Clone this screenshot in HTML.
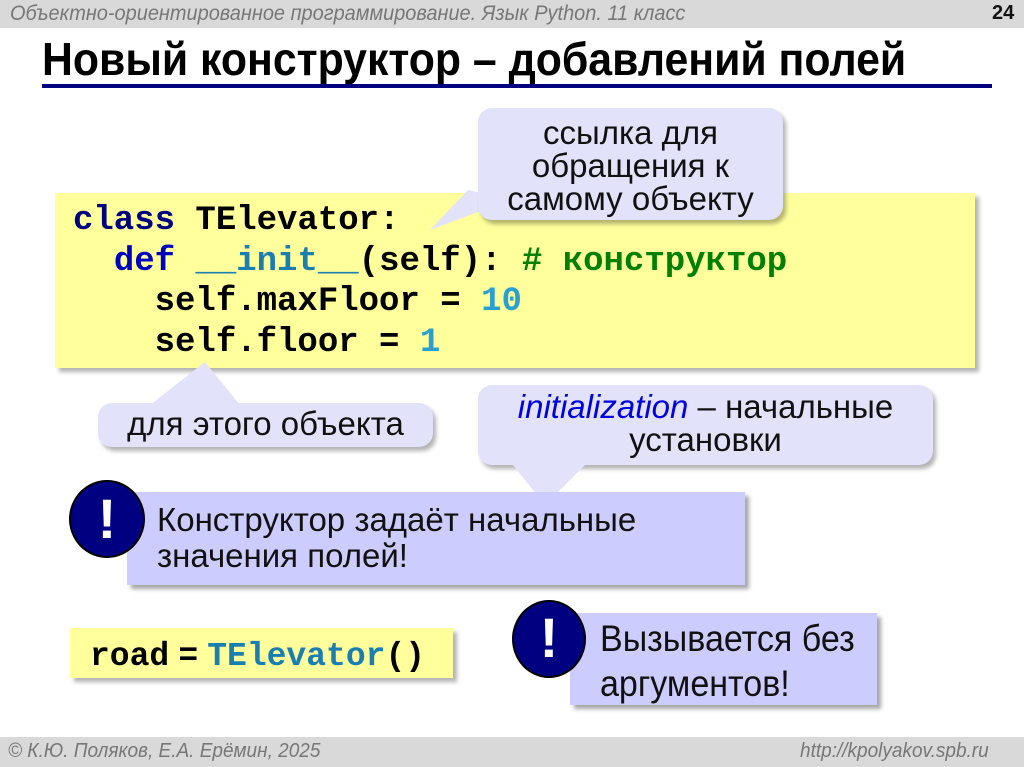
<!DOCTYPE html>
<html><head><meta charset="utf-8"><style>
body{margin:0;width:1024px;height:767px;position:relative;overflow:hidden;background:#fff;font-family:"Liberation Sans",sans-serif}
.a{position:absolute}
.hdr{left:0;top:0;width:1024px;height:28px;background:#d9d9d9}
.bub{background:#e2e2fa;border-radius:14px;box-shadow:3px 4px 4px rgba(0,0,0,.3)}
.box{background:#ccccff;box-shadow:4px 4px 4px rgba(0,0,0,.35)}
.code{font-family:"Liberation Mono",monospace;font-weight:bold;font-size:34px;white-space:pre;line-height:40.5px}
.circ{background:#000080;border:2px solid #000;border-radius:50%;color:#fff;font-weight:bold;text-align:center}
</style></head><body>
<div class="a hdr"></div>
<div class="a" style="left:10px;top:2px;font-size:21px;font-style:italic;color:#777;transform:scaleX(.95);transform-origin:left;white-space:nowrap">Объектно-ориентированное программирование. Язык Python. 11 класс</div>
<div class="a" style="left:992px;top:2px;font-size:20px;font-weight:bold;color:#111">24</div>
<div class="a" style="left:42px;top:32px;font-size:46px;font-weight:bold;color:#000;transform:scaleX(.93);transform-origin:left;white-space:nowrap">Новый конструктор – добавлений полей</div>
<div class="a" style="left:42px;top:84px;width:950px;height:4px;background:#000080"></div>

<div class="a" style="left:55px;top:193px;width:920px;height:175px;background:#ffff9c;box-shadow:4px 4px 4px rgba(0,0,0,.3)"></div>
<div class="a code" style="left:73px;top:201px;color:#000"><span style="color:#000080">class</span> TElevator:
  <span style="color:#0000c0">def</span> <span style="color:#1a7fb0">__init__</span>(self): <span style="color:#008000"># конструктор</span>
    self.maxFloor = <span style="color:#2aa0d0">10</span>
    self.floor = <span style="color:#2aa0d0">1</span></div>

<svg class="a" style="left:0;top:0" width="1024" height="767">
<polygon points="430,230 468,190 510,200" fill="#e2e2fa"/>
<polygon points="150,405 205,362 240,405" fill="#e2e2fa"/>
</svg>
<div class="a bub" style="left:478px;top:108px;width:305px;height:112px"></div>
<div class="a" style="left:478px;top:116px;width:305px;text-align:center;font-size:33px;line-height:33px;color:#111">ссылка для<br>обращения к<br>самому объекту</div>
<div class="a bub" style="left:98px;top:403px;width:335px;height:44px"></div>
<div class="a" style="left:98px;top:405px;width:335px;text-align:center;font-size:33px;color:#111">для этого объекта</div>
<div class="a bub" style="left:478px;top:385px;width:455px;height:80px"></div>
<svg class="a" style="left:0;top:0" width="1024" height="767"><polygon points="505,455 545,505 595,455" fill="#e2e2fa"/></svg>
<div class="a" style="left:478px;top:390px;width:455px;text-align:center;font-size:33px;line-height:33px;color:#111;white-space:nowrap"><i style="color:#0000e0">initialization</i> – начальные<br>установки</div>

<div class="a box" style="left:127px;top:492px;width:618px;height:93px"></div>
<div class="a" style="left:157px;top:502px;font-size:33px;line-height:36px;color:#111;white-space:nowrap">Конструктор задаёт начальные<br>значения полей!</div>
<div class="a circ" style="left:69px;top:480px;width:72px;height:74px;font-size:56px;line-height:74px">!</div>

<div class="a" style="left:70px;top:628px;width:383px;height:50px;background:#ffff9c;box-shadow:4px 4px 4px rgba(0,0,0,.3)"></div>
<div class="a code" style="left:90px;top:634px;font-size:33px;line-height:40px">road<span style="display:inline-block;width:38px;text-align:center;font-family:'Liberation Sans'">=</span><span style="color:#1a7fb0">TElevator</span>()</div>

<div class="a box" style="left:570px;top:613px;width:307px;height:92px"></div>
<div class="a" style="left:600px;top:616px;font-size:37px;line-height:45px;color:#111;transform:scaleX(.92);transform-origin:left;white-space:nowrap">Вызывается без<br>аргументов!</div>
<div class="a circ" style="left:512px;top:600px;width:70px;height:74px;font-size:56px;line-height:72px">!</div>

<div class="a" style="left:0;top:737px;width:1024px;height:30px;background:#d9d9d9"></div>
<div class="a" style="left:8px;top:740px;font-size:20px;font-style:italic;color:#777;transform:scaleX(.95);transform-origin:left;white-space:nowrap">© К.Ю. Поляков, Е.А. Ерёмин, 2025</div>
<div class="a" style="left:800px;top:740px;font-size:20px;font-style:italic;color:#777;transform:scaleX(.95);transform-origin:left;white-space:nowrap">http://kpolyakov.spb.ru</div>
</body></html>
